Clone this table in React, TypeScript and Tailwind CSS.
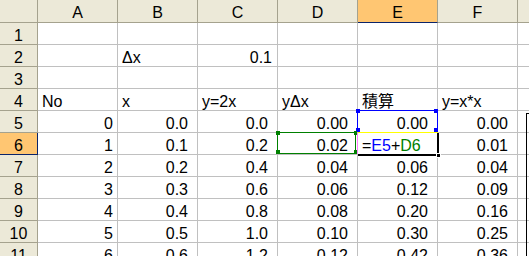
import React from 'react'

type Cell = { v?: React.ReactNode; left?: boolean; pr?: string }

const COLS = ['A', 'B', 'C', 'D', 'E', 'F']

const num = (v: string, fmt = true): Cell => ({ v, pr: fmt ? 'pr-[9px]' : 'pr-[4px]' })
const txt = (v: React.ReactNode): Cell => ({ v, left: true })

const formula = (
  <span>
    =<span className="text-[#0000ff]">E5</span>+<span className="text-[#008000]">D6</span>
  </span>
)

const ROWS: Cell[][] = [
  [{}, {}, {}, {}, {}, {}],
  [{}, txt('Δx'), { v: '0.1', pr: 'pr-[5px]' }, {}, {}, {}],
  [{}, {}, {}, {}, {}, {}],
  [txt('No'), txt('x'), txt('y=2x'), txt('yΔx'), txt('積算'), txt('y=x*x')],
  [num('0', false), num('0.0'), num('0.0'), num('0.00'), num('0.00'), num('0.00')],
  [num('1', false), num('0.1'), num('0.2'), num('0.02'), { v: formula, left: true }, num('0.01')],
  [num('2', false), num('0.2'), num('0.4'), num('0.04'), num('0.06'), num('0.04')],
  [num('3', false), num('0.3'), num('0.6'), num('0.06'), num('0.12'), num('0.09')],
  [num('4', false), num('0.4'), num('0.8'), num('0.08'), num('0.20'), num('0.16')],
  [num('5', false), num('0.5'), num('1.0'), num('0.10'), num('0.30'), num('0.25')],
  [num('6', false), num('0.6'), num('1.2'), num('0.12'), num('0.42'), num('0.36')],
]

function ColHeader({ label, active }: { label: string; active?: boolean }) {
  return (
    <div
      className={`w-[80px] h-[23px] shrink-0 border-r border-b text-center pt-[5px] leading-[16px] ${
        active ? 'bg-[#ffc672] border-r-[#a5a28e] border-b-[#0a246a]' : 'bg-[#ece9d8] border-[#a5a28e]'
      }`}
    >
      {label}
    </div>
  )
}

function Row({ n, cells }: { n: number; cells: Cell[] }) {
  const active = n === 6
  return (
    <div className="flex">
      <div
        className={`w-[38px] h-[22px] shrink-0 border-r border-b text-center pt-[5px] leading-[16px] ${
          active ? 'bg-[#ffc672] border-[#0a246a]' : 'bg-[#ece9d8] border-[#a5a28e]'
        }`}
      >
        {n}
      </div>
      {cells.map((c, i) => (
        <div
          key={i}
          className={`w-[80px] h-[22px] shrink-0 border-r border-b border-[#c0c0c0] pt-[5px] leading-[16px] whitespace-nowrap ${
            c.left ? 'text-left pl-[4px]' : `text-right ${c.pr ?? ''}`
          }`}
        >
          {c.v}
        </div>
      ))}
      <div className="flex-1 h-[22px] border-b border-[#c0c0c0]" />
    </div>
  )
}

export default function App() {
  return (
    <div
      className="relative w-[529px] h-[256px] overflow-hidden bg-white text-black text-[16px]"
      style={{ fontFamily: '"Liberation Sans", "Noto Sans CJK JP", sans-serif' }}
    >
      <div className="flex">
        <div className="w-[38px] h-[23px] shrink-0 bg-[#ece9d8] border-r border-b border-[#a5a28e]" />
        {COLS.map((c) => (
          <ColHeader key={c} label={c} active={c === 'E'} />
        ))}
        <div className="flex-1 h-[23px] bg-[#ece9d8] border-b border-[#a5a28e]" />
      </div>
      {ROWS.map((cells, i) => (
        <Row key={i} n={i + 1} cells={cells} />
      ))}

      {/* range highlight: E5 (blue) */}
      <div className="absolute left-[357px] top-[110px] w-[81px] h-[22px] border-l border-r border-t border-[#0000ff]" />
      <div className="absolute left-[356px] top-[109px] w-[4px] h-[4px] bg-[#0000ff]" />
      <div className="absolute left-[434px] top-[109px] w-[4px] h-[4px] bg-[#0000ff]" />
      <div className="absolute left-[356px] top-[128px] w-[4px] h-[4px] bg-[#0000ff]" />
      <div className="absolute left-[434px] top-[128px] w-[4px] h-[4px] bg-[#0000ff]" />

      {/* range highlight: D6 (green) */}
      <div className="absolute left-[277px] top-[132px] w-[79px] h-[22px] border border-[#008000]" />
      <div className="absolute left-[276px] top-[131px] w-[4px] h-[4px] bg-[#008000]" />
      <div className="absolute left-[354px] top-[131px] w-[3px] h-[4px] bg-[#008000]" />
      <div className="absolute left-[276px] top-[150px] w-[4px] h-[4px] bg-[#008000]" />
      <div className="absolute left-[354px] top-[150px] w-[3px] h-[4px] bg-[#008000]" />

      {/* active cell E6 */}
      <div className="absolute left-[358px] top-[132px] w-[80px] h-[1px] bg-[#ffff00]" />
      <div className="absolute left-[357px] top-[133px] w-[1px] h-[21px] bg-[#ff80ff]" />
      <div className="absolute left-[437px] top-[133px] w-[2px] h-[23px] bg-black" />
      <div className="absolute left-[358px] top-[154px] w-[81px] h-[2px] bg-black" />
      <div className="absolute left-[436px] top-[153px] w-[5px] h-[5px] bg-black border border-white" />

      {/* object edge at right */}
      <div className="absolute left-[526px] top-[113px] w-[10px] h-[160px] border-l border-t border-black" />
    </div>
  )
}
